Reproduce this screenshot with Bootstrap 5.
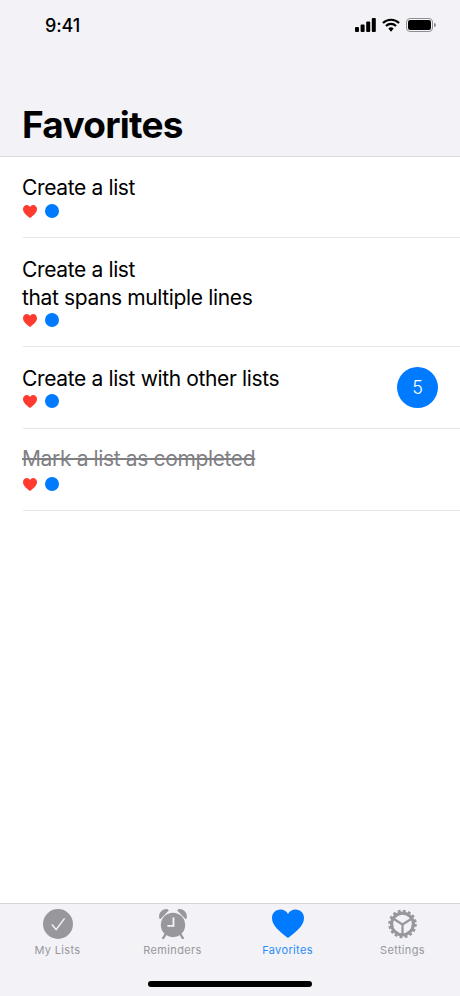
<!DOCTYPE html>
<html lang="en">
<head>
  <meta charset="UTF-8" />
  <meta name="viewport" content="width=device-width, initial-scale=1.0"/>
  <title>Favorites</title>
  <link href="https://cdn.jsdelivr.net/npm/bootstrap@5.3.0/dist/css/bootstrap.min.css" rel="stylesheet" />
  <style>
    html, body { height: 996px; overflow: hidden; }
    body { font-family: Inter, "Liberation Sans", sans-serif; color: #000; background: #fff; }
    .phone { width: 460px; height: 996px; }
    .top-area { height: 157px; background: #f2f2f7; border-bottom: 1px solid #dcdcde; }
    .status-row { height: 51px; padding: 15px 24px 0 45px; }
    .clock { font-size: 18px; font-weight: 500; line-height: 22px; letter-spacing: -.1px; }
    .status-icons { gap: 6px; padding-top: 3px; }
    .page-title { font-size: 37px; font-weight: 700; line-height: 44px; margin: 52px 0 0 22px; letter-spacing: -.75px; }
    .fav-row { margin-left: 23px; padding: 18px 22px 0 0; border-bottom: 1px solid #e6e6e8; height: 82px; }
    .fav-row.first { height: 81px; padding-top: 17px; }
    .fav-row.first .tag-row { margin-top: 2px; }
    .fav-row.tall { height: 109px; }
    .fav-row.last { padding-top: 16px; }
    .fav-row.last .tag-row { margin-top: 4px; }
    .fav-name { font-size: 21px; line-height: 28px; letter-spacing: -.36px; margin-left: -1px; }
    .fav-name.done { color: #808084; text-decoration: line-through; }
    .tag-row { height: 14px; margin-top: 1px; gap: 8px; }
    .dot-blue { width: 14px; height: 14px; border-radius: 50%; background: #007aff; }
    .count-pill { width: 41px; height: 41px; margin-top: 2px; border-radius: 50%; background: #007aff; color: #fff; font-size: 18px; font-weight: 300; }
    .tab-bar { height: 93px; background: #f2f2f7; border-top: 1px solid #d6d6d8; }
    .tab-item { width: 115px; padding-top: 5px; color: #98989c; font-size: 11px; font-weight: 400; line-height: 14px; letter-spacing: .35px; }
    .tab-item.on { color: #2b8cf7; }
    .tab-icon { height: 32px; margin-bottom: 2px; }
    .home-bar { width: 164px; height: 6px; border-radius: 3px; background: #000; bottom: 9px; left: 148px; }
  </style>
</head>
<body>
  <div class="phone d-flex flex-column position-relative">
    <div class="top-area flex-shrink-0">
      <div class="status-row d-flex justify-content-between align-items-start">
        <div class="clock">9:41</div>
        <div class="status-icons d-flex align-items-center">
          <svg width="21" height="14" viewBox="0 0 21 14"><rect x="0" y="9" width="4" height="5" rx="1"/><rect x="5.600" y="6.500" width="4" height="7.500" rx="1"/><rect x="11.200" y="3.500" width="4" height="10.500" rx="1"/><rect x="16.800" y="0" width="4" height="14" rx="1"/></svg>
          <svg width="18" height="14" viewBox="0 0 19 14"><path d="M1 5 A12 12 0 0 1 18 5" fill="none" stroke="#000" stroke-width="2.300"/><path d="M4.200 8 A7.600 7.600 0 0 1 14.800 8" fill="none" stroke="#000" stroke-width="2.300"/><path d="M9.500 14 L6.700 10.800 A4 4 0 0 1 12.300 10.800 Z"/></svg>
          <svg width="30" height="14" viewBox="0 0 30 14"><rect x=".5" y=".5" width="26" height="13" rx="3.500" fill="none" stroke="#8e8e93"/><rect x="2" y="2" width="23" height="10" rx="2.200"/><path d="M28 5 a2 2 0 0 1 0 4 Z" fill="#8e8e93"/></svg>
        </div>
      </div>
      <h1 class="page-title">Favorites</h1>
    </div>

    <div class="flex-grow-1">
      <div class="fav-row first d-flex justify-content-between">
        <div>
          <div class="fav-name">Create a list</div>
          <div class="tag-row d-flex align-items-center">
            <svg width="14" height="13" viewBox="0 0 14 13"><path fill="#ff3b30" d="M7 13 C3 10 0 7.500 0 4 C0 1.700 1.700 0 3.800 0 C5.200 0 6.300 .7 7 2 C7.700 .7 8.800 0 10.200 0 C12.300 0 14 1.700 14 4 C14 7.500 11 10 7 13 Z"/></svg>
            <div class="dot-blue"></div>
          </div>
        </div>
      </div>
      <div class="fav-row tall d-flex justify-content-between">
        <div>
          <div class="fav-name">Create a list<br>that spans multiple lines</div>
          <div class="tag-row d-flex align-items-center">
            <svg width="14" height="13" viewBox="0 0 14 13"><path fill="#ff3b30" d="M7 13 C3 10 0 7.500 0 4 C0 1.700 1.700 0 3.800 0 C5.200 0 6.300 .7 7 2 C7.700 .7 8.800 0 10.200 0 C12.300 0 14 1.700 14 4 C14 7.500 11 10 7 13 Z"/></svg>
            <div class="dot-blue"></div>
          </div>
        </div>
      </div>
      <div class="fav-row d-flex justify-content-between">
        <div>
          <div class="fav-name">Create a list with other lists</div>
          <div class="tag-row d-flex align-items-center">
            <svg width="14" height="13" viewBox="0 0 14 13"><path fill="#ff3b30" d="M7 13 C3 10 0 7.500 0 4 C0 1.700 1.700 0 3.800 0 C5.200 0 6.300 .7 7 2 C7.700 .7 8.800 0 10.200 0 C12.300 0 14 1.700 14 4 C14 7.500 11 10 7 13 Z"/></svg>
            <div class="dot-blue"></div>
          </div>
        </div>
        <div class="count-pill d-flex align-items-center justify-content-center">5</div>
      </div>
      <div class="fav-row last d-flex justify-content-between">
        <div>
          <div class="fav-name done">Mark a list as completed</div>
          <div class="tag-row d-flex align-items-center">
            <svg width="14" height="13" viewBox="0 0 14 13"><path fill="#ff3b30" d="M7 13 C3 10 0 7.500 0 4 C0 1.700 1.700 0 3.800 0 C5.200 0 6.300 .7 7 2 C7.700 .7 8.800 0 10.200 0 C12.300 0 14 1.700 14 4 C14 7.500 11 10 7 13 Z"/></svg>
            <div class="dot-blue"></div>
          </div>
        </div>
      </div>
    </div>

    <div class="tab-bar flex-shrink-0 d-flex">
      <div class="tab-item text-center">
        <div class="tab-icon">
          <svg width="30" height="30" viewBox="0 0 32 32"><circle cx="16" cy="16" r="16" fill="#98989c"/><path d="M9.500 16.500 L14 22 L23 10" fill="none" stroke="#f2f2f7" stroke-width="1.600"/></svg>
        </div>
        My Lists
      </div>
      <div class="tab-item text-center">
        <div class="tab-icon">
          <svg width="30" height="30" viewBox="0 0 32 32"><path fill="#98989c" d="M1.500 10 C0 5 4 0 9 0 C10 0 11 .7 11.500 1.500 L3 10.500 C2.500 11 1.800 10.800 1.500 10 Z M30.500 10 C32 5 28 0 23 0 C22 0 21 .7 20.500 1.500 L29 10.500 C29.500 11 30.200 10.800 30.500 10 Z"/><circle cx="16" cy="17" r="13" fill="#98989c"/><path d="M8 27 L5.500 31 M24 27 L26.500 31" stroke="#98989c" stroke-width="2.500" stroke-linecap="round"/><path d="M16.500 9 V18 H10" fill="none" stroke="#f2f2f7" stroke-width="2"/></svg>
        </div>
        Reminders
      </div>
      <div class="tab-item on text-center">
        <div class="tab-icon">
          <svg width="32" height="30" viewBox="0 0 32 30"><path fill="#007aff" d="M16 29 C7 22 0 16.500 0 9 C0 4 3.800 .5 8.500 .5 C11.700 .5 14.500 2.200 16 5 C17.500 2.200 20.300 .5 23.500 .5 C28.200 .5 32 4 32 9 C32 16.500 25 22 16 29 Z"/></svg>
        </div>
        Favorites
      </div>
      <div class="tab-item text-center">
        <div class="tab-icon">
          <svg width="29" height="30" viewBox="0 0 32 32"><circle cx="16" cy="16" r="12" fill="none" stroke="#98989c" stroke-width="3.500"/><circle cx="16" cy="16" r="14" fill="none" stroke="#98989c" stroke-width="3.500" stroke-dasharray="3 2.500"/><path d="M16 16.500 L16 27 M16 16.500 L6.500 10.500 M16 16.500 L25.500 10.500" stroke="#98989c" stroke-width="2.500"/></svg>
        </div>
        Settings
      </div>
    </div>
    <div class="home-bar position-absolute"></div>
  </div>
  <script src="https://cdn.jsdelivr.net/npm/bootstrap@5.3.0/dist/js/bootstrap.bundle.min.js"></script>
</body>
</html>
